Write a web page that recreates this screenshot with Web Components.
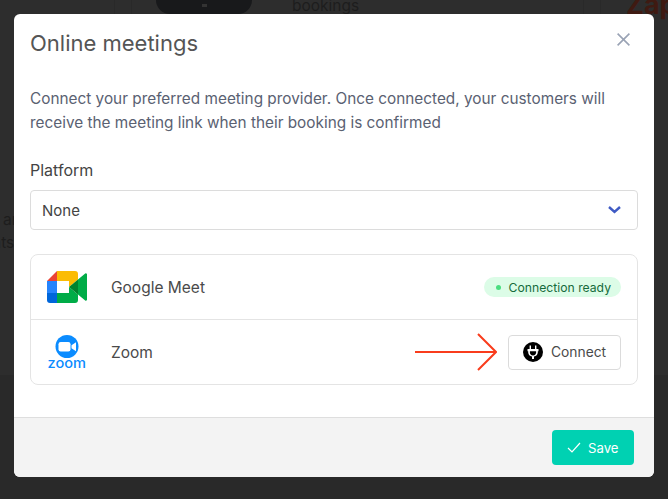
<!DOCTYPE html>
<html>
<head>
<meta charset="utf-8">
<title>Online meetings</title>
<style>
  html, body { margin: 0; height: 100%; background: #2d2d2d; overflow: hidden; }
  body { font-family: Inter, "Liberation Sans", sans-serif; }
</style>
</head>
<body>
<page-backdrop></page-backdrop>
<meetings-modal heading="Online meetings">
  <provider-row name="Google Meet">
    <svg slot="logo" width="40" height="32" viewBox="0 0 40 32">
      <path d="M0 10 L10 0 V10Z" fill="#ea4335"/>
      <path d="M10 0 H28 a3 3 0 0 1 3 3 V8.5 L22 16 V10 H10Z" fill="#fbbc04"/>
      <path d="M0 10 H10 V22 H0Z" fill="#2684fc"/>
      <path d="M0 22 H10 V32 H3 a3 3 0 0 1 -3 -3Z" fill="#0066da"/>
      <path d="M10 22 H22 V16 L31 23.5 V29 a3 3 0 0 1 -3 3 H10Z" fill="#00ac47"/>
      <path d="M22 16 L31 8.5 V23.5Z" fill="#00832d"/>
      <path d="M31 8.5 L38.2 2.6 a1.1 1.1 0 0 1 1.8 0.9 V28.5 a1.1 1.1 0 0 1 -1.8 0.9 L31 23.5Z" fill="#00ac47"/>
    </svg>
    <status-pill slot="action">Connection ready</status-pill>
  </provider-row>
  <provider-row name="Zoom">
    <svg slot="logo" width="40" height="38" viewBox="0 0 40 38">
      <circle cx="20" cy="13.5" r="11.5" fill="#0b8cff"/>
      <rect x="11.5" y="9" width="12" height="9.5" rx="2.2" fill="#fff"/>
      <path d="M24.5 12.2 L29 9.3 V18.2 L24.5 15.3Z" fill="#fff"/>
      <text x="0.5" y="35" font-family="Inter, sans-serif" font-size="14" font-weight="500" fill="#0b8cff" textLength="38.5" lengthAdjust="spacingAndGlyphs">zoom</text>
    </svg>
    <connect-action slot="action"></connect-action>
  </provider-row>
</meetings-modal>

<script>
class PageBackdrop extends HTMLElement {
  constructor() {
    super();
    this.shadowDOM = this.attachShadow({ mode: 'open' });
  }

  connectedCallback() {
    this.shadowDOM.innerHTML = `
      <style>
        :host { position: absolute; inset: 0; display: block; overflow: hidden; }
        div, span { position: absolute; }
        .line { top: 0; width: 1px; height: 14px; background: #292929; }
        .band { left: 0; right: 0; top: 375px; bottom: 0; background: #292929; }
        .phone {
          left: 156px; top: -30px; width: 96px; height: 44px;
          background: #18191b; border-radius: 14px;
        }
        .dot { left: 202px; top: 4px; width: 5px; height: 3px; background: #333; }
        .txt { color: #1d1d1d; font-size: 15.5px; line-height: 18px; white-space: nowrap; }
        .zap { left: 626px; top: -10px; color: #3f1a12; font-size: 27px; font-weight: 700; line-height: 30px; }
      </style>
      <div class="band"></div>
      <div class="line" style="left:114px"></div>
      <div class="line" style="left:131px"></div>
      <div class="line" style="left:583px"></div>
      <div class="line" style="left:600px"></div>
      <div class="phone"></div>
      <div class="dot"></div>
      <span class="txt" style="left:292px;top:-3px">bookings</span>
      <span class="txt" style="left:3px;top:211px">ar</span>
      <span class="txt" style="left:-8px;top:234px">nts</span>
      <span class="zap">Zap</span>
    `;
  }
}

class MeetingsModal extends HTMLElement {
  constructor() {
    super();
    this.shadowDOM = this.attachShadow({ mode: 'open' });
  }

  connectedCallback() {
    const heading = this.getAttribute('heading');
    this.shadowDOM.innerHTML = `
      <style>
        :host {
          display: flex;
          flex-direction: column;
          position: absolute;
          left: 14px; top: 14px;
          width: 640px; height: 463px;
          background: #fff;
          border-radius: 6px;
          overflow: hidden;
        }
        header { display: flex; justify-content: space-between; box-sizing: border-box; padding: 14px 16px 0; height: 49px; }
        h2 { margin: 0; font-size: 22px; font-weight: 400; line-height: 30px; color: #555; }
        .close { margin: 5px 8px 0 0; width: 13px; height: 13px; }
        main { flex: 1; padding: 24px 16px 0; }
        p { margin: 0; font-size: 15.35px; line-height: 24px; color: #5a6172; }
        label { display: block; margin-top: 23px; font-size: 16px; line-height: 24px; color: #444; }
        .select {
          display: flex; align-items: center; justify-content: space-between;
          box-sizing: border-box; height: 40px; margin-top: 8px; padding: 0 16px 0 11px;
          border: 1px solid #dcdcdc; border-radius: 4px;
          font-size: 15px; color: #444;
        }
        .list {
          display: block; margin-top: 24px;
          border: 1px solid #e4e4e4; border-radius: 8px;
        }
        footer {
          display: flex; justify-content: flex-end; align-items: center;
          box-sizing: border-box; height: 60px; padding: 0 20px 0 0;
          background: #f3f3f3; border-top: 1px solid #dedede;
        }
        button {
          display: flex; align-items: center; gap: 7px;
          height: 35px; width: 82px; box-sizing: border-box; padding: 0 0 0 15px;
          background: #00d1b2; border: 0; border-radius: 4px;
          color: #fff; font: 400 13.2px Inter, sans-serif;
        }
      </style>
      <header>
        <h2>${heading}</h2>
        <svg class="close" viewBox="0 0 13 13" fill="none" stroke="#9aa3b5" stroke-width="1.6"><path d="M.6 .6 12.4 12.4M12.4 .6 .6 12.4"/></svg>
      </header>
      <main>
        <p>Connect your preferred meeting provider. Once connected, your customers will receive the meeting link when their booking is confirmed</p>
        <label>Platform</label>
        <div class="select">
          <span>None</span>
          <svg width="13" height="8" viewBox="0 0 13 8" fill="none" stroke="#3f5bc4" stroke-width="2.4"><path d="M1 1 6.5 6 12 1"/></svg>
        </div>
        <div class="list"><slot></slot></div>
      </main>
      <footer>
        <button>
          <svg width="14" height="11" viewBox="0 0 14 11" fill="none" stroke="#fff" stroke-width="1.2"><path d="M1 6 5 10 13 1"/></svg>
          Save
        </button>
      </footer>
    `;
  }
}

class ProviderRow extends HTMLElement {
  constructor() {
    super();
    this.shadowDOM = this.attachShadow({ mode: 'open' });
  }

  connectedCallback() {
    this.shadowDOM.innerHTML = `
      <style>
        :host {
          display: flex; align-items: center;
          box-sizing: border-box; height: 64px; padding: 0 16px 0 15px;
          font-size: 15.5px; color: #4a4a4a;
        }
        :host(:not(:last-child)) { height: 65px; border-bottom: 1px solid #e4e4e4; }
        .logo { display: flex; justify-content: center; width: 41px; margin-right: 24px; }
        .name { flex: 1; }
      </style>
      <div class="logo"><slot name="logo"></slot></div>
      <div class="name">${this.getAttribute('name')}</div>
      <slot name="action"></slot>
    `;
  }
}

class StatusPill extends HTMLElement {
  constructor() {
    super();
    this.shadowDOM = this.attachShadow({ mode: 'open' });
  }

  connectedCallback() {
    this.shadowDOM.innerHTML = `
      <style>
        :host {
          display: inline-flex; align-items: center; gap: 8px;
          height: 20px; padding: 0 10px 0 12px; border-radius: 10px;
          background: #dcfce7; color: #166b3c;
          font-size: 12.2px; font-weight: 400;
        }
        i { width: 5px; height: 5px; border-radius: 50%; background: #4ade80; }
      </style>
      <i></i><slot></slot>
    `;
  }
}

class ConnectAction extends HTMLElement {
  constructor() {
    super();
    this.shadowDOM = this.attachShadow({ mode: 'open' });
  }

  connectedCallback() {
    this.shadowDOM.innerHTML = `
      <style>
        :host { display: flex; align-items: center; gap: 11px; }
        .btn {
          display: flex; align-items: center; gap: 8px;
          box-sizing: border-box; width: 113px; height: 35px; padding-left: 14px;
          background: #fff; border: 1px solid #dbdbdb; border-radius: 4px;
          font-size: 13.8px; color: #4a4a4a;
        }
      </style>
      <svg width="82" height="38" viewBox="0 0 82 38" fill="none" stroke="#f93c1c" stroke-width="2"><path d="M0 19 H80 M63 1 81 19 63 37"/></svg>
      <div class="btn">
        <svg width="20" height="20" viewBox="0 0 20 20">
          <circle cx="10" cy="10" r="10" fill="#000"/>
          <path d="M6.6 3.5 H8 V7 H12 V3.5 H13.4 V7 H15.5 V9.2 H14.8 V10.5 A4.6 4.6 0 0 1 11 14.6 V17 H9 V14.6 A4.6 4.6 0 0 1 5.2 10.5 V9.2 H4.5 V7 H6.6Z" fill="#fff"/>
          <path d="M6.9 9.2 H13.1 V10.3 A3.1 3.1 0 0 1 6.9 10.3Z" fill="#000"/>
        </svg>
        Connect
      </div>
    `;
  }
}

customElements.define('page-backdrop', PageBackdrop);
customElements.define('meetings-modal', MeetingsModal);
customElements.define('provider-row', ProviderRow);
customElements.define('status-pill', StatusPill);
customElements.define('connect-action', ConnectAction);
</script>
</body>
</html>
